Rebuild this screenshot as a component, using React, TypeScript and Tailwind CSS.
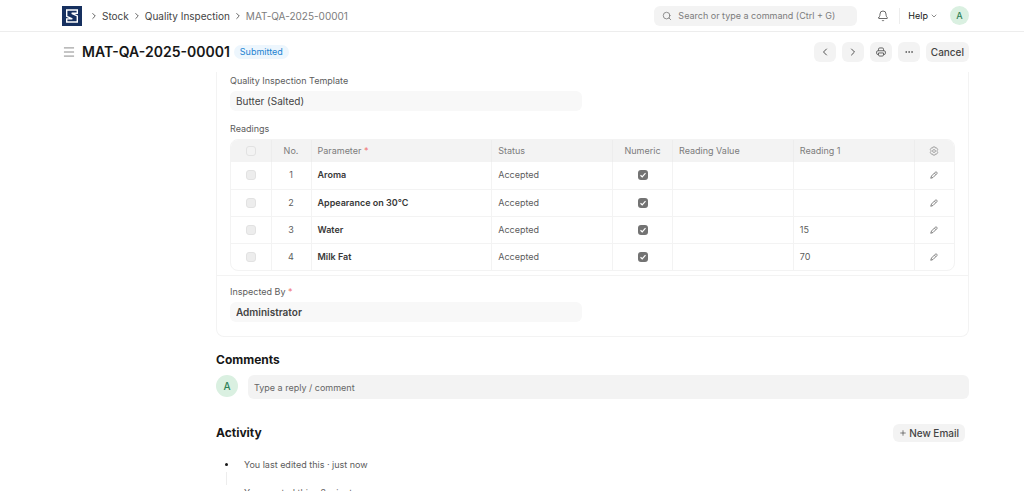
import React from 'react';
import { Bell, ChevronDown, ChevronLeft, ChevronRight, Ellipsis, Menu, Plus, Search } from 'lucide-react';

interface Reading {
  parameter: string;
  status: string;
  value: string;
  reading1: string;
}

const readings: Reading[] = [
  { parameter: 'Aroma', status: 'Accepted', value: '', reading1: '' },
  { parameter: 'Appearance on 30°C', status: 'Accepted', value: '', reading1: '' },
  { parameter: 'Water', status: 'Accepted', value: '', reading1: '15' },
  { parameter: 'Milk Fat', status: 'Accepted', value: '', reading1: '70' },
];

const Logo = () => (
  <svg viewBox="0 0 20 20" className="w-5 h-5" aria-hidden="true">
    <rect width="20" height="20" fill="#16305f" />
    <path d="M15.300 7.300V4H4.700v6.300l5.600 2.600H4.700V16h10.600V9.900L9.700 7.300z" fill="none" stroke="#fff" strokeWidth="1.400" />
  </svg>
);

const Gear = () => (
  <svg viewBox="0 0 16 16" className="w-2.5 h-2.5 mx-auto" fill="none" stroke="#8d8d8d" strokeWidth="1.2" aria-hidden="true">
    <path d="M6.300 1.500h3.400l.7 1.800 1.900-.3 1.700 2.900-1.200 1.600v1l1.200 1.600-1.700 2.900-1.900-.3-.7 1.800H6.300l-.7-1.800-1.900.3L2 10.100l1.200-1.600v-1L2 5.900 3.700 3l1.900.3z" />
    <circle cx="8" cy="8" r="2.300" />
  </svg>
);

const PrintIcon = () => (
  <svg viewBox="0 0 16 16" className="w-2.5 h-2.5" fill="none" stroke="currentColor" strokeWidth="1.4" strokeLinejoin="round" aria-hidden="true">
    <path d="M4 6V3.500A2 2 0 0 1 6 1.500h4a2 2 0 0 1 2 2V6" />
    <path d="M4 12H3a2 2 0 0 1-2-2V8a2 2 0 0 1 2-2h10a2 2 0 0 1 2 2v2a2 2 0 0 1-2 2h-1" />
    <path d="M4 9.500h8v3a2 2 0 0 1-2 2H6a2 2 0 0 1-2-2z" />
  </svg>
);

const EditIcon = () => (
  <svg viewBox="0 0 16 16" className="w-2 h-2" fill="none" stroke="currentColor" strokeWidth="1.7" strokeLinejoin="round" aria-hidden="true">
    <path d="M10.500 2.500c1-1 2-1 3 0s1 2 0 3L6 13l-4.500 1.500L3 10z" />
    <path d="M9 4.500L11.500 7" />
  </svg>
);

const Avatar = ({ className }: { className: string }) => (
  <span className={`rounded-full bg-[#daf0e1] text-[#30825a] font-medium flex items-center justify-center shrink-0 ${className}`}>A</span>
);

const iconButton = 'w-[22px] h-5 rounded-md bg-[#f3f3f3] flex items-center justify-center text-[#525252]';

const App: React.FC = () => {
  return (
    <div className="h-screen overflow-hidden bg-white font-[Inter,sans-serif] text-[10px] leading-4 text-[#5c5c5c]">
      {/* Navbar */}
      <header className="h-8 border-b border-[#ededed] pl-[62px] pr-[55px] flex items-center justify-between">
        <nav className="flex items-center gap-[3px] text-[#444]">
          <a href="#home" aria-label="Home" className="mr-1"><Logo /></a>
          <ChevronRight className="w-2.5 h-2.5" />
          <a href="#stock">Stock</a>
          <ChevronRight className="w-2.5 h-2.5" />
          <a href="#quality-inspection">Quality Inspection</a>
          <ChevronRight className="w-2.5 h-2.5" />
          <a href="#doc" className="text-[#7c7c7c]">MAT-QA-2025-00001</a>
        </nav>
        <div className="flex items-center text-[9px]">
          <label className="w-[203px] h-5 rounded-md bg-[#f3f3f3] flex items-center gap-1.5 px-2 text-[#7c7c7c]">
            <Search className="w-2.5 h-2.5 shrink-0" />
            <input type="text" aria-label="Search" placeholder="Search or type a command (Ctrl + G)" className="w-full bg-transparent outline-none placeholder:text-[#7c7c7c]" />
          </label>
          <button aria-label="Notifications" className="ml-5 text-[#383838]"><Bell className="w-3 h-3" strokeWidth={1.5} /></button>
          <span className="ml-2.5 w-px h-4 bg-[#ededed]" />
          <button className="ml-2 flex items-center gap-0.5 text-[#171717]">Help <ChevronDown className="w-2 h-2 text-[#525252]" /></button>
          <Avatar className="ml-3 w-[19px] h-[19px]" />
        </div>
      </header>

      {/* Page head */}
      <div className="h-10 pl-[62px] pr-[55px] flex items-center justify-between">
        <div className="flex items-center">
          <button aria-label="Toggle sidebar" className="text-[#7c7c7c]"><Menu className="w-3.5 h-3.5" strokeWidth={1.5} /></button>
          <h1 className="ml-1.5 text-sm font-semibold text-[#171717]">MAT-QA-2025-00001</h1>
          <span className="ml-1 px-1.5 h-3.5 leading-[14px] rounded-full bg-[#edf6fd] text-[#2383d2] text-[9px]">Submitted</span>
        </div>
        <div className="flex items-center gap-1.5">
          <button aria-label="Previous" className={iconButton}><ChevronLeft className="w-3 h-3" /></button>
          <button aria-label="Next" className={iconButton}><ChevronRight className="w-3 h-3" /></button>
          <button aria-label="Print" className={iconButton}><PrintIcon /></button>
          <button aria-label="Menu" className={iconButton}><Ellipsis className="w-2.5 h-2.5" /></button>
          <button className="h-5 px-[5px] rounded-md bg-[#f3f3f3] font-medium text-[#444]">Cancel</button>
        </div>
      </div>

      <main className="pl-[216px] pr-[55px]">
        {/* Form */}
        <div className="border border-t-0 border-[#f3f3f3] rounded-b-lg">
          <section className="px-[13px] pb-1 border-b border-[#f3f3f3]">
            <label htmlFor="template" className="block pt-px text-[9px]">Quality Inspection Template</label>
            <input id="template" readOnly value="Butter (Salted)" className="block mt-0.5 w-[352px] max-w-full h-5 px-1.5 rounded-md bg-[#f8f8f8] text-[#444] outline-none" />
            <h3 className="mt-2.5 text-[9px]">Readings</h3>
            <div className="mt-0.5 border border-[#f3f3f3] rounded-lg overflow-hidden">
              <table className="w-full table-fixed text-[9px] text-left">
                <thead className="bg-[#f3f3f3] text-[#7c7c7c]">
                  <tr className="h-[22px] *:font-normal *:border-l *:border-[#ededed] *:first:border-l-0">
                    <th className="w-10"><input type="checkbox" aria-label="Select all" className="block mx-auto w-2.5 h-2.5 appearance-none rounded-[3px] border border-[#e2e2e2]" /></th>
                    <th className="w-10 text-center">No.</th>
                    <th className="w-1/4 px-1.5">Parameter <span className="text-[#f07070]">*</span></th>
                    <th className="px-1.5">Status</th>
                    <th className="w-[60px] text-center">Numeric</th>
                    <th className="px-1.5">Reading Value</th>
                    <th className="px-1.5">Reading 1</th>
                    <th className="w-10"><button aria-label="Configure columns" className="block mx-auto"><Gear /></button></th>
                  </tr>
                </thead>
                <tbody>
                  {readings.map((row, i) => (
                    <tr key={row.parameter} className="h-[27px] border-t border-[#f3f3f3] first:border-t-0 *:border-l *:border-[#f3f3f3] *:first:border-l-0">
                      <td><input type="checkbox" aria-label={`Select row ${i + 1}`} className="block mx-auto w-2.5 h-2.5 appearance-none rounded-[3px] border border-[#e2e2e2] bg-[#ededed]" /></td>
                      <td className="text-center">{i + 1}</td>
                      <td className="px-1.5 font-semibold text-[#383838]">{row.parameter}</td>
                      <td className="px-1.5">{row.status}</td>
                      <td>
                        <span className="grid w-2.5 h-2.5 mx-auto">
                          <input type="checkbox" checked readOnly aria-label="Numeric" className="col-start-1 row-start-1 w-2.5 h-2.5 appearance-none rounded-[3px] bg-[#737373]" />
                          <svg viewBox="0 0 10 10" className="col-start-1 row-start-1 w-2.5 h-2.5 pointer-events-none" fill="none" stroke="#fff" strokeWidth="1.2">
                            <path d="M2.500 5.300l1.700 1.500 3.300-3.600" />
                          </svg>
                        </span>
                      </td>
                      <td className="px-1.5">{row.value}</td>
                      <td className="px-1.5">{row.reading1}</td>
                      <td><button aria-label={`Edit row ${i + 1}`} className="block mx-auto text-[#6b6b6b]"><EditIcon /></button></td>
                    </tr>
                  ))}
                </tbody>
              </table>
            </div>
          </section>
          <section className="px-[13px] pt-2 pb-3.5">
            <label htmlFor="inspected-by" className="block text-[9px]">Inspected By <span className="text-[#f07070]">*</span></label>
            <input id="inspected-by" readOnly value="Administrator" className="block mt-0.5 w-[352px] max-w-full h-5 px-1.5 rounded-md bg-[#f8f8f8] font-semibold text-[#444] outline-none" />
          </section>
        </div>

        {/* Comments */}
        <h2 className="mt-[15px] text-xs leading-4 font-bold text-[#171717]">Comments</h2>
        <div className="mt-[7px] flex items-start gap-2.5">
          <Avatar className="w-[22px] h-[22px]" />
          <input type="text" aria-label="Comment" placeholder="Type a reply / comment" className="flex-1 h-6 px-1.5 rounded-md bg-[#f3f3f3] text-[9px] outline-none placeholder:text-[#666]" />
        </div>

        {/* Activity */}
        <div className="mt-[25px] pr-1 flex items-center justify-between">
          <h2 className="text-xs leading-4 font-bold text-[#171717]">Activity</h2>
          <button className="h-[18px] px-1.5 rounded-md bg-[#f3f3f3] font-medium text-[#444] flex items-center gap-0.5"><Plus className="w-2 h-2" /> New Email</button>
        </div>
        <ul className="mt-[15px] text-[9px]">
          <li className="h-7 flex">
            <span className="w-7 pl-[9px] pt-1.5 flex flex-col gap-1.5">
              <span className="w-[3px] h-[3px] rounded-full bg-[#171717] shrink-0" />
              <span className="w-px flex-1 ml-px bg-[#ededed]" />
            </span>
            You last edited this · just now
          </li>
          <li className="h-7 pl-7 whitespace-nowrap">You created this · 2 minutes ago</li>
        </ul>
      </main>
    </div>
  );
};

export default App;
